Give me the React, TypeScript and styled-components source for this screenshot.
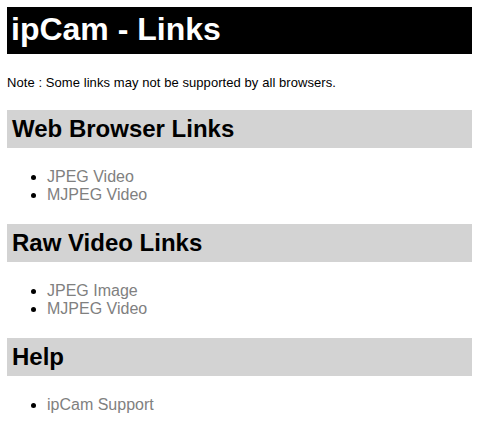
import React from 'react'
import styled, { createGlobalStyle } from 'styled-components'

const GlobalStyle = createGlobalStyle`
    body {
        margin: 7px;
        background: #ffffff;
        font-family: 'Liberation Sans', Arial, Helvetica, sans-serif;
        color: #000000;
    }
`

const Title = styled.h1`
    margin: 0 0 21.44px;
    padding: 2px 4px 5px;
    font-size: 32px;
    line-height: 40px;
    font-weight: bold;
    color: #ffffff;
    background-color: #000000;
`

const Note = styled.p`
    margin: 13px 0;
    font-size: 13px;
    letter-spacing: 0.07px;
`

const SectionTitle = styled.h2`
    margin: 19.92px 0;
    padding: 5px 5px;
    font-size: 24px;
    font-weight: bold;
    background-color: #d3d3d3;
`

const LinkList = styled.ul`
    margin: 16px 0;
    padding-left: 40px;
    font-size: 16px;
`

const LinkItem = styled.li`
    list-style: disc;
`

const Link = styled.a`
    color: #808080;
    text-decoration: none;
`

type Section = {
    title: string
    links: { label: string; href: string }[]
}

const sections: Section[] = [
    {
        title: 'Web Browser Links',
        links: [
            { label: 'JPEG Video', href: '#jpeg-video' },
            { label: 'MJPEG Video', href: '#mjpeg-video' },
        ],
    },
    {
        title: 'Raw Video Links',
        links: [
            { label: 'JPEG Image', href: '#jpeg-image' },
            { label: 'MJPEG Video', href: '#mjpeg-raw' },
        ],
    },
    {
        title: 'Help',
        links: [{ label: 'ipCam Support', href: '#support' }],
    },
]

const App = () => (
    <>
        <GlobalStyle />
        <Title>ipCam - Links</Title>
        <Note>Note : Some links may not be supported by all browsers.</Note>
        {sections.map((section) => (
            <React.Fragment key={section.title}>
                <SectionTitle>{section.title}</SectionTitle>
                <LinkList>
                    {section.links.map((link) => (
                        <LinkItem key={link.href}>
                            <Link href={link.href}>{link.label}</Link>
                        </LinkItem>
                    ))}
                </LinkList>
            </React.Fragment>
        ))}
    </>
)

export default App
